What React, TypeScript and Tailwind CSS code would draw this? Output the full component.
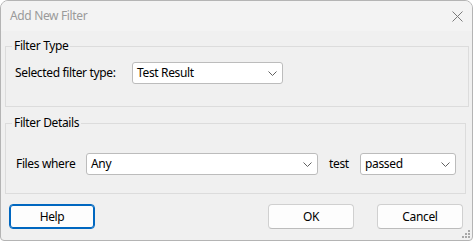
import React from 'react';

const Chevron = () => (
  <svg width="9" height="5" viewBox="0 0 9 5" className="shrink-0">
    <path d="M0.5 0.5 L4.5 4.5 L8.5 0.5" fill="none" stroke="#606060" strokeWidth="1" />
  </svg>
);

interface ComboProps {
  value: string;
  width: string;
}

const Combo: React.FC<ComboProps> = ({ value, width }) => (
  <div
    className={`${width} h-[22px] flex items-center justify-between bg-white border border-[#bcbcbc] rounded-[3px] pl-[4px] pr-[5px] text-black`}
  >
    <span>{value}</span>
    <Chevron />
  </div>
);

const DialogButton: React.FC<{ label: string; focused?: boolean }> = ({ label, focused }) => (
  <button
    className={`w-[86px] h-[25px] rounded-[4px] bg-[#fdfdfd] text-black ${
      focused
        ? 'border border-[#0067c0] shadow-[inset_0_0_0_1px_#0067c0]'
        : 'border border-[#d0d0d0] border-b-[#bcbcbc]'
    }`}
  >
    {label}
  </button>
);

const Grip = () => (
  <svg width="8" height="8" viewBox="0 0 8 8" className="absolute right-[2px] bottom-[2px]">
    {[
      [6, 0],
      [6, 3],
      [3, 3],
      [6, 6],
      [3, 6],
      [0, 6],
    ].map(([x, y], i) => (
      <rect key={i} x={x} y={y} width="2" height="2" fill="#a8a8a8" />
    ))}
  </svg>
);

export default function App() {
  return (
    <div
      className="w-[473px] h-[241px] bg-white text-[12px] leading-[16px] tracking-[-0.35px]"
      style={{ fontFamily: '"Noto Sans", "Open Sans", sans-serif' }}
    >
      <div className="relative w-full h-full flex flex-col bg-[#f0f0f0] border border-[#b4b4b4] rounded-t-[8px] rounded-b-[4px] overflow-hidden">
        {/* title bar */}
        <div className="h-[30px] shrink-0 flex items-center justify-between bg-[#f3f3f3] pl-[9px] pr-[9px]">
          <span className="text-[#9a9a9a]">Add New Filter</span>
          <svg width="11" height="11" viewBox="0 0 11 11">
            <path d="M0.5 0.5 L10.5 10.5 M10.5 0.5 L0.5 10.5" stroke="#7a7a7a" strokeWidth="1" />
          </svg>
        </div>

        <div className="flex flex-col pl-[4px] pt-[7px]">
          <fieldset className="w-[464px] h-[69px] border border-[#dcdcdc] px-[6px]">
            <legend className="px-[2px] text-black">Filter Type</legend>
            <div className="flex items-center pl-[3px] mt-[8px]">
              <span className="w-[117px] text-black">Selected filter type:</span>
              <Combo value="Test Result" width="w-[151px]" />
            </div>
          </fieldset>

          <fieldset className="w-[461px] h-[79px] mt-[8px] border border-[#dcdcdc] px-[6px]">
            <legend className="px-[2px] text-black">Filter Details</legend>
            <div className="flex items-center pl-[4px] mt-[22px]">
              <span className="w-[70px] text-black">Files where</span>
              <Combo value="Any" width="w-[232px]" />
              <span className="ml-[11px] w-[31px] text-black">test</span>
              <Combo value="passed" width="w-[96px]" />
            </div>
          </fieldset>

          <div className="flex items-center mt-[10px] pl-[4px]">
            <DialogButton label="Help" focused />
            <div className="ml-[173px]">
              <DialogButton label="OK" />
            </div>
            <div className="ml-[23px]">
              <DialogButton label="Cancel" />
            </div>
          </div>
        </div>
        <Grip />
      </div>
    </div>
  );
}
